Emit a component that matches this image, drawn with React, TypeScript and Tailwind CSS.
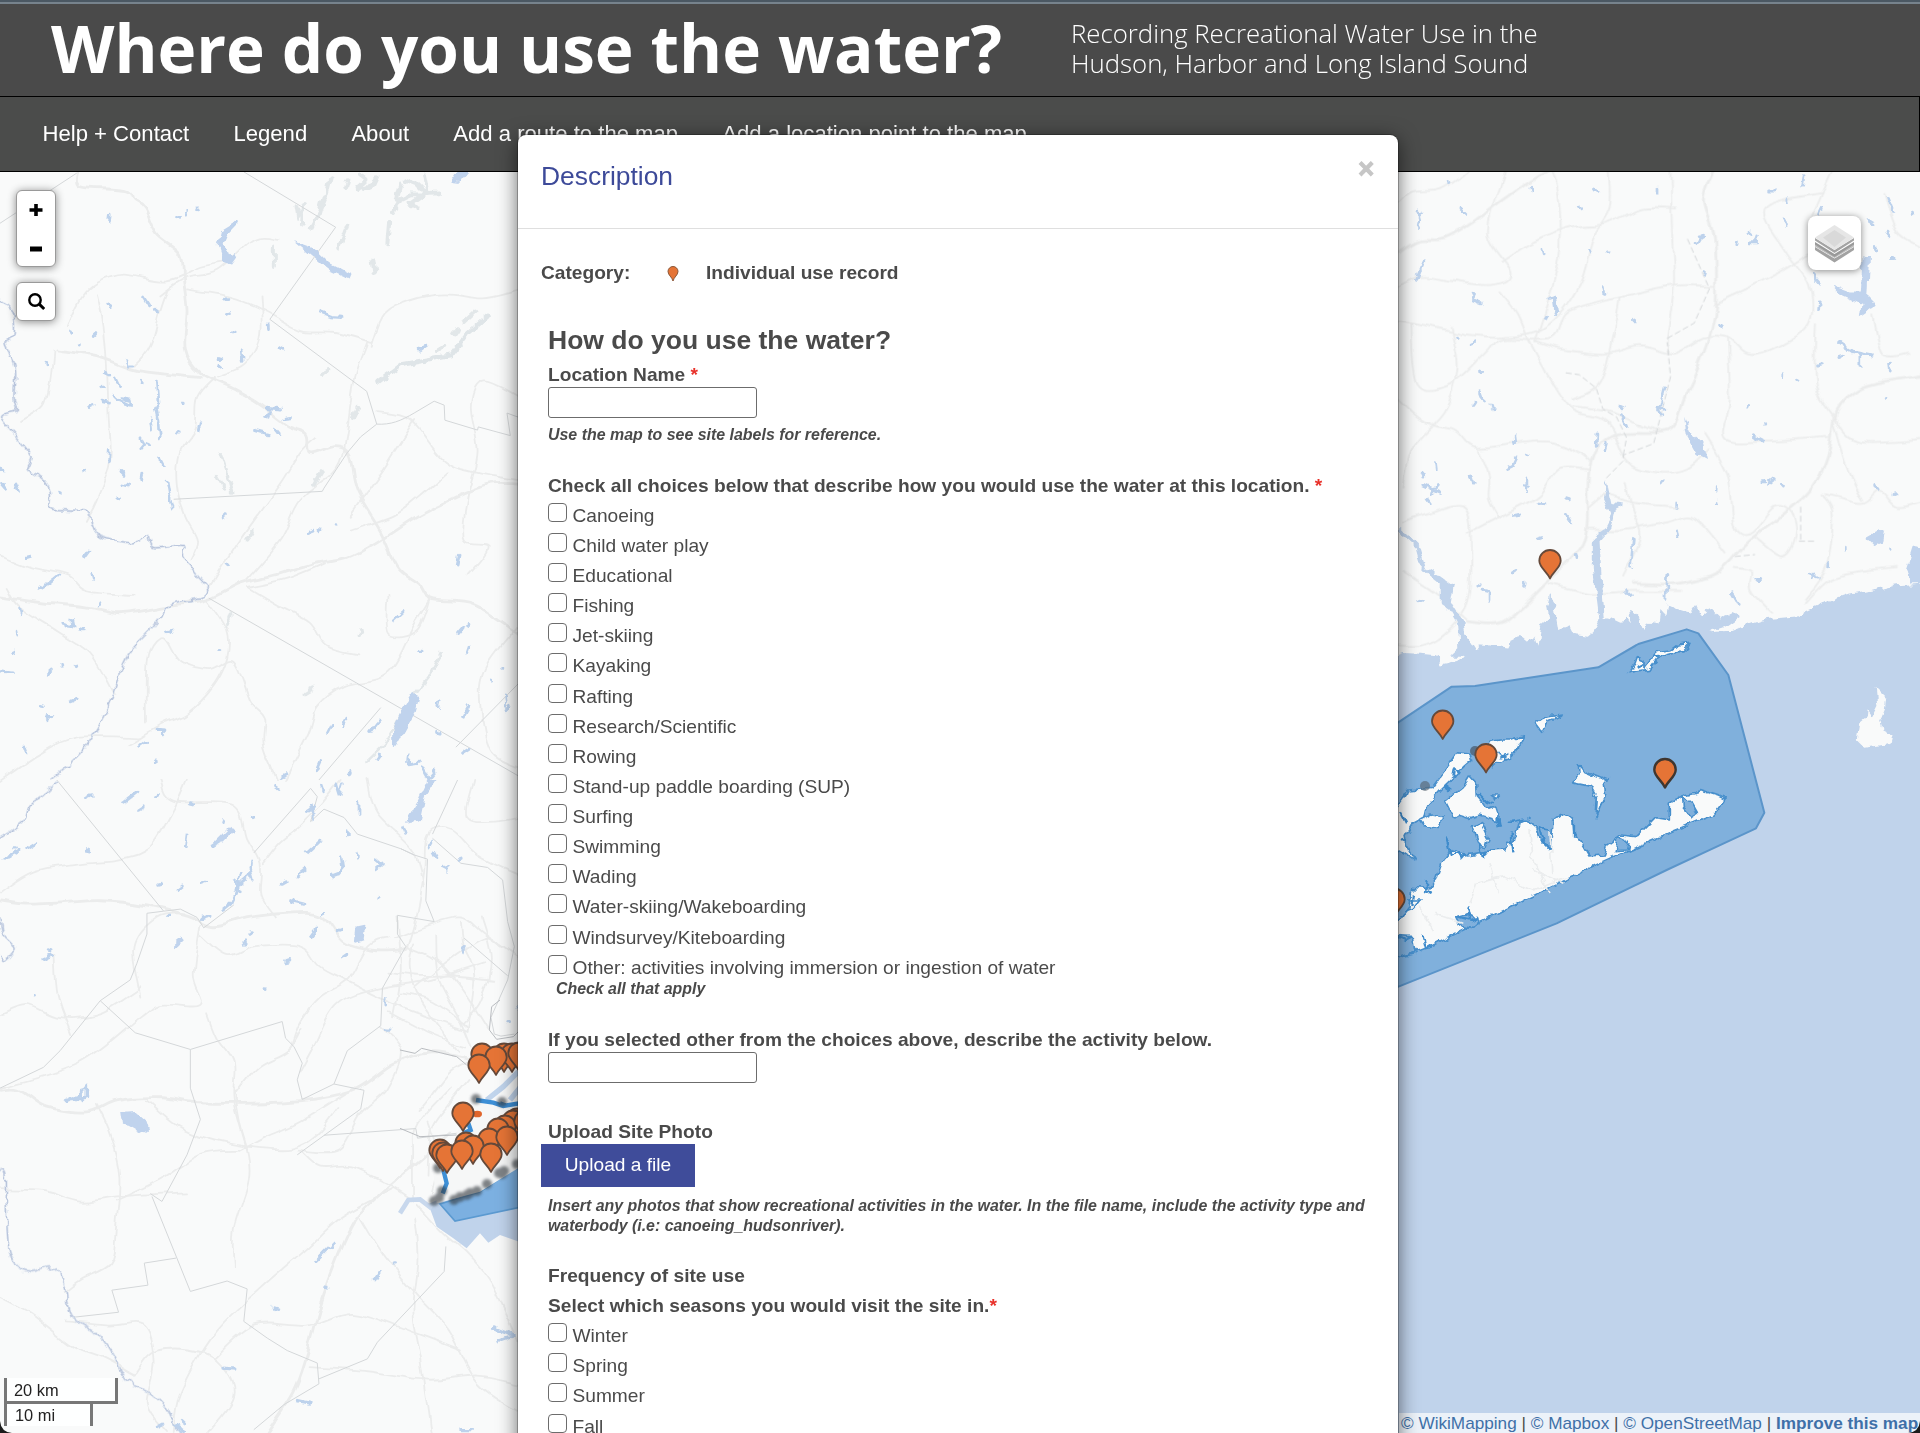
import React from "react";

type Pt = [number, number];

// Turns "x,y x,y ..." into a smooth path through every point.
function smooth(points: string): string {
  const p: Pt[] = points
    .trim()
    .split(/\s+/)
    .map((s) => s.split(",").map(Number) as Pt);
  let d = `M${p[0][0]} ${p[0][1]}`;
  for (let i = 0; i < p.length - 1; i++) {
    const a = p[Math.max(0, i - 1)];
    const b = p[i];
    const c = p[i + 1];
    const e = p[Math.min(p.length - 1, i + 2)];
    d += `C${b[0] + (c[0] - a[0]) / 6} ${b[1] + (c[1] - a[1]) / 6} ${c[0] - (e[0] - b[0]) / 6} ${c[1] - (e[1] - b[1]) / 6} ${c[0]} ${c[1]}`;
  }
  return d;
}

const NW = "translate(0 160) scale(0.33398 0.39541)";
const SW = "translate(0 780) scale(0.33398 0.41646)";
const NE = "translate(1390 170) scale(0.33801 0.38265)";
const LI = "translate(1390 540) scale(0.33333)";
const NY = "translate(400 1000) scale(0.33333)";

const nwRoads = [
  "235,30 245,65 375,75 400,100 430,120 470,190 540,240 550,310 560,380 555,480 600,540 700,580 780,620 860,670 920,690 930,740 1000,725 1045,745 1070,840 1140,940 1190,1030 1250,1070 1290,1110 1420,1125 1557,1200",
  "0,1105 130,1120 260,1130 360,1145 480,1130 620,1110 720,1070 820,1050 940,1020 1040,1005 1140,960 1250,900 1370,850 1470,820 1557,820",
  "170,480 300,500 400,530 480,540 600,550",
  "200,420 240,350 290,310 370,290 500,305 600,270 700,255",
  "290,340 310,420 320,520 325,640 330,760 290,860 260,910",
  "560,330 700,350 800,385 900,430 1000,435 1110,460",
  "400,520 450,470 480,380 500,330",
  "20,1080 60,1130 170,1190 270,1250 340,1350",
  "640,550 590,600 580,680 535,740 530,830 555,900 590,960 570,1010",
  "970,1020 850,1060 740,1080",
  "620,1110 680,1190 680,1260 640,1330 560,1400 480,1430 380,1480",
  "440,1420 440,1300 450,1240 490,1210 540,1270 630,1290 700,1270 750,1370 790,1410 790,1480 830,1568",
  "740,1080 840,1130 930,1170 980,1230 1070,1250",
  "1050,900 1100,840 1150,780 1240,660",
  "1050,940 1180,900 1260,850 1340,790",
  "1100,460 1060,560 1040,680 1010,780 900,860 840,960 740,1060",
  "1557,600 1450,560 1410,620 1430,740 1400,850 1390,960 1460,980 1400,1050",
  "1110,470 1150,390 1230,355 1330,340 1450,350 1557,330",
  "1130,640 1230,660 1330,760 1420,790 1557,810",
  "1557,1170 1450,1290 1440,1400 1470,1500 1557,1540",
  "1290,1110 1240,1180 1160,1300 1030,1330 950,1380 920,1450 850,1568",
  "160,480 150,560 130,620 60,660",
  "0,1000 90,1030 200,1050 260,1090 400,1100",
  "480,340 550,300 650,280 760,200 840,200",
  "780,340 780,450 730,520 650,550",
  "950,700 900,740 840,820 720,960 630,1080",
  "1160,1100 1165,1200 1250,1190 1290,1110",
  "0,1568 120,1500 230,1460 420,1460",
];
const swRoads = [
  "0,290 80,298 180,295 300,290 440,302 560,325 640,350 740,330 860,320 960,325 1030,390 1130,410 1220,405",
  "0,745 60,745 140,785 260,797 350,770 480,763 600,775 790,775 950,765 1070,740 1180,680 1290,655 1400,670",
  "800,1568 880,1470 920,1380 960,1260 1010,1150 1070,1050 1160,980 1250,920 1350,850",
  "0,270 100,220 240,200 360,190 450,160 520,70 560,0",
  "480,0 520,50 700,60 740,140 780,200 780,280 820,330",
  "700,740 720,830 740,890 745,960 700,1080 700,1170",
  "620,560 650,620 700,680 700,770 740,890",
  "440,770 530,830 620,860 740,880 870,885 950,850 1010,790",
  "290,780 330,850 360,950 350,1080 330,1160 240,1200 190,1230",
  "350,1010 480,960 600,900 720,890",
  "0,980 130,985 240,1010 350,1000 560,990",
  "520,1568 540,1470 640,1330 780,1220 910,1130 1020,1050 1180,980",
  "600,370 680,420 760,400 900,400 960,450 1030,480 1130,520 1250,560 1400,600",
  "790,200 840,150 900,110 960,60 1020,0",
  "1220,405 1250,320 1270,220 1280,130 1350,120 1430,180 1557,230",
  "1140,590 1200,650 1160,740 1080,800 1010,890 890,890",
  "870,640 900,580 960,520 1040,480 1100,400 1160,380",
  "700,760 770,690 860,650 900,600",
  "1240,1050 1250,1150 1235,1280 1260,1400 1290,1568",
  "1250,1020 1330,1090 1400,1140 1470,1210 1557,1360",
  "1080,1050 1150,1140 1250,1240 1340,1320 1430,1450 1557,1520",
  "900,890 960,930 1050,930 1160,970 1240,1010",
  "930,1410 1100,1420 1280,1440 1430,1430 1557,1450",
  "640,1390 760,1310 920,1310 1060,1280 1250,1330 1380,1370",
  "200,1300 330,1310 430,1310 460,1400 440,1500 500,1568",
  "400,1430 470,1370 620,1380 700,1470 620,1568",
  "0,1240 90,1280 220,1360 310,1390 400,1430",
  "720,890 790,860 900,820 1060,740",
  "1100,0 1130,80 1240,170 1270,260",
  "1420,0 1400,90 1480,100 1557,90",
  "600,350 580,470 600,540 480,540 420,570 240,680 0,740",
  "420,520 400,400 470,330 550,320",
  "0,560 80,540 180,570 300,560 420,500",
  "160,420 170,520 210,610",
  "900,700 940,640 1010,540 1140,500 1290,480 1450,440",
  "1180,380 1280,350 1380,330 1450,370 1557,430",
  "1220,400 1300,430 1380,500 1460,600",
  "1160,460 1250,470 1360,470 1480,480",
  "1200,510 1300,530 1400,590",
  "1240,390 1230,450 1260,530 1370,650",
  "1300,370 1310,470 1380,580 1410,640",
  "1380,340 1390,400 1420,470 1400,600",
  "1440,330 1470,430 1440,530 1390,580",
  "1500,400 1450,380 1350,430 1240,500",
  "1170,560 1290,610 1390,640",
  "1190,330 1200,460 1180,570",
  "1250,800 1290,760 1350,700 1420,670",
  "1240,1010 1240,900 1250,830 1350,740",
  "1280,950 1290,840 1340,780 1400,720",
  "1290,990 1310,900 1280,820",
];
const neRoads = [
  "0,230 80,185 160,180 240,140 330,80 420,25 470,0",
  "960,0 930,80 960,180 965,340 950,420 910,520 870,600 840,670 790,685 650,695 590,780 585,940 545,1010 460,1080 380,1150 320,1185 230,1180",
  "1568,535 1470,550 1390,570 1320,630 1300,730 1250,830 1150,910 1060,970 970,1050 850,1080 720,1080",
  "0,580 100,660 190,680 250,725 370,715 470,710 560,740 590,760",
  "260,730 290,800 290,860 320,910",
  "470,1080 590,1105 720,1100 860,1100",
  "0,320 90,280 180,290 300,300 360,270 290,160 340,0",
  "0,390 130,410 230,430 330,435 460,410 560,300 600,180 650,100 650,0",
  "60,400 80,560 180,560 280,480 330,440 480,440 530,370 680,330 830,300 960,300",
  "330,320 380,380 420,460 530,620 640,660 700,760 790,790 880,780 940,730",
  "430,450 520,470 640,480 740,460 840,480 930,440 1000,440 1060,480 1150,460 1240,400 1240,300 1170,210 1110,100 1280,60",
  "830,0 835,180 840,300 820,440 820,480",
  "960,350 1060,310 1170,260 1240,220",
  "1310,0 1280,60 1250,120",
  "480,0 500,80 500,230 430,450",
  "1260,400 1260,560 1310,640 1380,710 1568,705",
  "1000,440 1005,600 990,700 1100,710 1300,700",
  "230,1180 140,1110 40,1050",
  "0,1238 90,1240 160,1210 230,1130 240,1000 220,880 100,900 40,920",
  "590,780 500,780 440,850 340,900 230,950",
  "590,940 700,940 820,920 900,910 990,1000",
  "930,690 1000,800 1020,930 1070,950 1140,880 1190,900 1200,960 1160,1010 1080,960",
  "1020,1040 1070,1050 1070,1100 1130,1160",
  "1280,850 1310,900 1290,1040 1230,1120",
  "1290,850 1400,870 1450,840 1500,880 1568,870",
  "1400,860 1350,770 1310,650",
  "1230,1130 1300,1070 1400,1050 1500,1040",
  "700,820 720,900 740,960 690,1060",
  "590,880 640,850 720,870 850,880",
  "540,620 640,630 700,650 790,680",
  "180,410 200,520 160,630 70,720 40,830",
  "1568,200 1500,160 1460,60",
  "1430,380 1460,480 1530,480",
  "0,110 60,60 150,50 230,0",
  "680,330 660,430 620,560 540,600",
  "850,100 740,100 640,140 540,150 420,190 330,240",
];

const boundaries = {
  nw: "M730 30L1005 170L808 403L1098 585L1128 668C1170 670 1200 660 1240 640L1300 610L1330 620L1332 658L1430 683L1432 675L1528 697L1518 640L1557 652M1128 668L1080 700L1040 740L970 830L965 838L520 858M625 1108L1557 1560M0 160L230 33M955 1568L1140 1385M1365 1485L1557 1320",
  sw: "M170 0L490 315M570 647L845 580L855 620L880 640L905 680L890 720L905 767L1000 730L1090 745L1080 790L890 900M300 530L405 607L570 647L570 740L600 815L560 900L485 1012L450 993M455 1000L570 1228L680 1203L740 1222M220 1290L355 1278L335 1225L443 1213L432 1160L527 1148M970 853L1245 837L1250 860L1400 845M955 1438L1100 1390L1130 1350L1330 1180L1335 1120M490 315L540 310L590 330L610 355L700 300M440 370L440 320L490 315M440 370L410 440L390 480L300 530L180 650L130 690L0 740M740 1222L730 1300L800 1340L860 1370L950 1400L955 1450L850 1500L760 1560M760 175L930 20L950 40L930 100L970 70L1030 90L1070 130L1200 165L1240 180L1280 190L1275 290L1300 340L1190 325L1190 370L1215 400L1145 500L1140 590L1040 650L1000 730M1295 130L1370 0M1295 140L1380 200L1460 210L1505 240L1520 340L1540 400L1520 480L1470 570L1480 610L1500 615L1540 610M1200 165L1240 180M1390 380L1520 470",
};

// Short strokes read as the small lakes scattered over the land.
const lakes = {
  nw: "M327 140l-2 15M528 143l10 2M558 128l1 6M590 124l4 4M705 160l-25 22l-18 35l10 25l15 18M660 210l8 30M700 240l-20 12M430 347l18 24M462 378l8 6M325 367l6 3M675 350l4 3M678 388l12 -4M693 434l6 2M722 480l3 26M835 472l12 6M800 420l1 6M658 522l6 4M650 500l8 2M208 432l4 6M282 443l8 -6M232 468l6 -1M140 512l0 8M380 508l6 18l12 0M315 540l14 6M345 552l10 18M305 570l8 6M422 560l4 4M340 598l18 14l36 8l0 -12l-30 -4M270 624l12 -5M305 608l20 4M468 560l5 50l-8 20l8 30l4 40l-6 8M450 655l4 30M600 660l-6 22M540 618l6 0M525 690l6 0M425 708l8 12l-12 12M440 715l8 2M330 735l-2 30M800 628l40 4M792 648l18 -10M765 684l35 8M825 680l14 14M850 656l20 -2M500 810l10 50l5 20M475 750l14 22M250 788l6 -3M362 785l12 10M368 820l14 4M425 795l-4 16M350 855l8 4M175 840l6 2M0 782l15 4M5 820l12 12M48 820l8 18M115 1085l30 -15l28 -20M275 1048l4 12M250 1005l16 -18M80 1005l12 -3M293 1125l6 -8M62 1135l4 12M185 1170l15 4M215 1165l4 16M200 1178l25 2M240 1186l8 2M48 1192l2 12M35 1248l8 -3M0 1292l40 3M140 1300l20 -15M188 1276l0 4M228 1278l2 2M210 1370l18 -6M120 1380l10 2M140 1405l16 0l-15 10M500 1195l18 -6M655 1238l4 0M665 905l10 -5M680 1022l4 2M920 943l18 -6M955 935l6 -4M1000 920l6 1M960 386l30 10l34 2M1375 1000l-6 24M1178 1165l26 -20M1370 1200l20 -20M1400 1175l4 2M1405 1230l-8 20M1252 1240l12 0M1315 1368l-4 14M1385 1410l20 -30M1505 1285l4 0M1475 1310l0 12M1510 1350l4 30M1515 1390l10 -8M980 1450l12 -20M1028 1430l10 -18M1110 1445l24 -28M945 1545l14 -28M470 1440l30 2l-14 12M415 1482l22 -14M465 1520l0 6M75 1485l6 14M1125 1520l12 -14M1225 1505l-2 22l30 -4M1262 1535l20 30l20 -20M1310 1450l8 4M1385 1500l22 -12M845 1560l14 -5M1040 1555l12 -3M1255 480l20 -12",
  sw: "M255 42l15 -6M370 55l40 -25M415 72l20 -10M465 38l10 -3M40 163l10 0M15 190l45 -20M80 165l25 -12M255 168l14 2M635 158l30 -15l30 -25M665 98l4 4M570 55l10 2M825 18l8 4M755 90l8 -2M555 160l5 -30M475 250l8 -2M530 265l16 -10M605 250l14 -4M750 200l-4 30l-30 20l-25 45l-30 20M700 240l20 30M720 225l-15 45M605 330l24 -6M745 210l10 30M930 60l6 35M920 75l20 -10M1075 52l0 30M965 15l4 10M1005 10l10 26M1025 10l-10 25M920 175l38 -28M890 230l24 -15M845 250l12 -5M1025 185l4 25l-15 15M995 230l20 -6M1070 180l0 8M1125 190l20 14M1130 210l14 -8M1128 285l4 -2M1040 120l0 16M965 325l10 -6M870 290l15 4l22 4M930 375l18 -20M1013 362l10 -3M735 395l-2 -6M745 368l5 -3M1028 425l14 -8M1205 115l6 15M1285 165l10 -14M1300 175l8 12M1325 210l14 6M1375 190l6 -2M1385 415l4 -12M855 436l10 -2M150 410l-6 -2M125 430l30 -10M100 518l4 0M790 499l10 1M500 325l8 0M195 770l40 -12l25 -25l0 30M205 765l50 0M240 745l8 30M975 1218l4 2M1120 1200l16 -20M1180 1157l8 0M945 1155l55 -45M1480 1315l60 20l-50 15M670 1410l40 2M890 1490l36 6M1155 530l0 12M1150 598l18 0M470 1555l18 -8M525 1550l25 12M545 1538l8 6M1385 1560l30 0M1550 540l5 10M1520 580l12 0M820 1268l12 3",
  ne: "M175 25l2 10M85 110l6 20l-5 18M80 105l8 15l8 -8M210 103l14 10M605 50l8 8M417 48l2 6M793 45l0 18M560 97l4 4M100 240l-22 45M90 265l-8 20M240 325l8 14l22 8M452 205l4 14M590 210l2 4M640 212l8 0M630 305l6 20M470 335l20 -5l5 35l-10 10M485 335l6 40M460 390l4 -10M720 392l2 2M200 440l2 2M240 455l16 -6M268 520l0 10M265 580l8 18l10 8M298 618l10 6M245 615l6 -8M372 710l-2 -12M400 745l10 4M375 750l-12 22l-18 8M135 765l2 14M240 800l6 18M405 805l0 30M395 825l18 4M100 825l50 20M110 860l10 12M120 845l20 -20M95 790l5 10M438 870l18 2M520 857l8 2M525 905l10 14M365 905l20 -3M435 965l14 -4M548 1005l2 10M365 1050l10 -6M260 1085l10 -4M275 1098l18 4l0 22M400 1080l-2 10M85 1128l14 -4M905 190l10 -15M920 175l8 -4M930 270l-2 6M1028 185l-2 10M1065 160l4 6M1068 190l14 0M1090 170l-12 16M1120 55l20 0M1168 75l2 8M1225 15l-4 25M1165 130l8 20M1268 115l8 -15M1475 75l16 36M1540 108l2 8M1410 130l22 12M1435 200l8 6M1470 160l6 14M1480 234l14 0M1250 275l20 20M1270 345l-2 22M975 405l6 4M1330 450l40 24l60 10M1390 480l0 30M1328 490l10 -3M1265 512l14 -3M1478 505l2 20M1165 535l0 10M1203 547l4 2M1468 596l2 -4M1062 622l2 -4M1105 664l4 0M1075 695l32 14M800 820l8 -10M965 830l0 6M968 866l0 4M848 870l0 14M848 940l4 20M1100 812l12 0M1120 820l14 -10M1160 824l4 4M1440 825l4 4M1488 848l6 -2M1350 985l0 8M1475 992l2 4M1240 1058l24 8M1250 1070l8 -14M1085 1070l12 0M1295 1030l0 12M810 570l-14 50l14 5M790 620l14 20M615 690l-2 30M640 715l-4 14M680 620l10 4M685 640l15 30M720 965l-8 70M822 1060l-6 60M700 1100l14 12M1010 1105l20 30",
};

const ridges =
  "M990 45l-12 40l-22 45l-28 45M970 90l-20 60M885 120l5 25M910 115l-6 45M1040 50l-6 18M1075 38l22 14l-26 20M1130 40l-12 22l-30 10M1180 130l20 -30l30 -12l40 0M1200 60l-12 40M1215 50l30 10l30 25l40 -2M1270 40l10 40l-50 30M1165 160l-5 50M1040 165l-24 55M900 140l-6 -14M1115 250l6 35M1220 110l30 10M1390 410l36 -28M820 220l0 50M1310 480l20 -10M1360 440l10 -12M965 540l18 -8M760 940l-22 24M940 820l20 -30M690 1150l-10 25M1080 1190l-6 10M915 1350l20 -10M1060 650l10 -20";

const rivers = [
  [NW, "0,355 35,380 42,440 15,465 45,520 45,600 50,635 5,650 50,700 95,750 85,780 125,805 150,840 152,880 200,885 265,890 275,920 300,952 400,968 440,950 460,980 548,975 550,1000 590,1050 622,1085 600,1110 515,1125 460,1180 385,1250 345,1330 310,1410 240,1500 150,1568"],
  [SW, "0,940 18,950 20,1060 35,1150 90,1180 150,1170 190,1200 215,1285 300,1335 340,1380 380,1440 480,1490 530,1560"],
  [SW, "0,330 10,370 42,400 20,430 0,425"],
  [SW, "175,0 140,30 90,60 70,100 0,140"],
];

const coast =
  "M-12 1280L40 1262L90 1264L135 1268L150 1292L215 1280L218 1272L178 1272L205 1250L202 1190L175 1150L150 1135L150 1085L110 1055L90 1035L75 985L30 950V935L55 955L85 980L105 1040L145 1060L185 1085L190 1080L180 1130L205 1165L218 1185L225 1215L255 1258L270 1240L350 1248L365 1222L385 1218L405 1232L430 1220L440 1243L447 1190L468 1175L462 1140L470 1110L485 1130L490 1160L498 1200L530 1190L545 1215L585 1220L605 1205L620 1180L600 1040L600 960L640 935L655 910L630 860L640 808L655 870L690 875L668 885L655 935L620 970L625 1050L635 1170L655 1175L680 1185L700 1165L715 1185L710 1150L735 1170L750 1205L765 1180L795 1185L800 1150L815 1165L820 1130L850 1150L885 1160L905 1135L920 1165L945 1145L980 1175L1020 1150L1040 1165L1000 1190L950 1205L1010 1205L1110 1170L1200 1165L1240 1150L1340 1110L1420 1100L1500 1085L1600 1080V1900H-12Z";

const pinsRight: Pt[] = [[1550, 578.5], [1442.7, 739], [1486, 772.5], [1394, 917]];
const pinsLeft: Pt[] = [
  [482, 1072], [504, 1072], [512, 1072], [519, 1071], [496, 1075], [479, 1083],
  [517, 1137], [513, 1139], [505, 1144], [498, 1147], [466, 1161], [525, 1139], [489, 1157], [507, 1155],
  [440, 1168], [443, 1171], [447, 1173], [473, 1164], [462, 1169], [491, 1172], [463, 1131],
];
const smudges: Pt[] = [
  [476, 1099], [502, 1102], [438, 1168], [442, 1191], [434, 1201], [439, 1198], [454, 1200], [460, 1197],
  [467, 1195], [470, 1193], [477, 1191], [487, 1184], [499, 1173], [504, 1171], [502, 1174], [517, 1164],
];

function Pin({ x, y, dark = false }: { x: number; y: number; dark?: boolean }) {
  return (
    <path
      transform={`translate(${x} ${y})`}
      d="M0 0C-3 -7 -10.7 -11 -10.7 -17.8A10.7 10.7 0 0 1 10.7 -17.8C10.7 -11 3 -7 0 0Z"
      fill="#e57436"
      stroke={dark ? "#3f3630" : "#65493a"}
      strokeWidth={dark ? 2.4 : 1.8}
      strokeLinejoin="round"
    />
  );
}

function Lines({ t, list }: { t: string; list: string[] }) {
  return (
    <g transform={t}>
      {list.map((r, i) => (
        <path key={i} d={smooth(r)} vectorEffect="non-scaling-stroke" strokeWidth={i < 3 ? 2.8 : 1.8} />
      ))}
    </g>
  );
}

function MapCanvas() {
  return (
    <svg className="absolute inset-0 h-full w-full" viewBox="0 0 1920 1433">
      <defs>
        <filter id="soft">
          <feGaussianBlur stdDeviation="1.5" />
        </filter>
        <filter id="ragged" filterUnits="userSpaceOnUse" x="0" y="0" width="1920" height="1433">
          <feTurbulence type="fractalNoise" baseFrequency="0.11" numOctaves="2" seed="4" />
          <feDisplacementMap in="SourceGraphic" scale="8" xChannelSelector="R" yChannelSelector="G" />
        </filter>
        <filter id="wavy" filterUnits="userSpaceOnUse" x="0" y="0" width="1920" height="1433">
          <feTurbulence type="fractalNoise" baseFrequency="0.04" numOctaves="2" seed="9" />
          <feDisplacementMap in="SourceGraphic" scale="9" xChannelSelector="R" yChannelSelector="G" />
        </filter>
      </defs>
      <rect width="1920" height="1433" fill="#f9fafa" />
      <g fill="none" stroke="#ebecec" strokeLinecap="round" strokeLinejoin="round" filter="url(#wavy)">
        <Lines t={NW} list={nwRoads} />
        <Lines t={SW} list={swRoads} />
        <Lines t={NE} list={neRoads} />
      </g>
      <g filter="url(#ragged)">
        <g transform={NW} fill="none" stroke="#e2e7e9" strokeWidth="12" strokeLinejoin="round" strokeLinecap="round">
          <path d={ridges} />
          <path d="M1130 562L1200 518L1350 495L1400 440L1460 395" strokeWidth="13" stroke="#dfe5e8" />
          <path d="M660 740l20 50l15 50M650 800l20 30" strokeWidth="8" />
          <path d="M1320 1245L1290 1300L1210 1390L1150 1480L1100 1520" strokeWidth="7" />
        </g>
      </g>
      <g fill="none" stroke="#d4d7d9" strokeWidth="1">
        <path transform={NW} d={boundaries.nw} vectorEffect="non-scaling-stroke" />
        <path transform={SW} d={boundaries.sw} vectorEffect="non-scaling-stroke" />
        <path
          transform={NE}
          d="M640 805L690 760L690 745L780 715L790 680L830 540L820 450M820 440L900 400L945 310L880 180M1210 970L1260 970M1215 880L1215 970M1020 1010L1080 1005M520 530L560 535L610 570L630 625L670 645L700 700L690 745"
          vectorEffect="non-scaling-stroke"
          strokeDasharray="6 3"
        />
      </g>
      <g fill="none" filter="url(#ragged)">
        {rivers.map(([t, d], i) => (
          <g key={i} transform={t}>
            <path d={smooth(d)} stroke="#dbe3ef" strokeWidth="2.4" vectorEffect="non-scaling-stroke" />
            <path d={smooth(d)} stroke="#b3c0d8" strokeWidth="0.9" vectorEffect="non-scaling-stroke" />
          </g>
        ))}
      </g>
      <g filter="url(#ragged)">
        <g fill="none" stroke="#bdd2ec" strokeLinejoin="round" strokeLinecap="round" strokeWidth="8">
          <path transform={NW} d={lakes.nw} />
          <path transform={SW} d={lakes.sw} />
          <path transform={NE} d={lakes.ne} />
        </g>
        <g fill="#c0d3ed">
          <g transform={NW}>
            <path d="M880 205L945 225L985 258L1052 288L1045 302L980 276L936 244Z" />
            <path d="M705 158L685 180L668 205L672 225L690 235L708 245L692 264L668 258L652 215L662 180Z" />
            <path d="M1345 55L1370 25H1410L1375 58Z" />
            <path d="M1240 1345L1256 1360L1242 1402L1196 1470L1180 1490L1176 1440L1200 1396Z" />
          </g>
          <g transform={SW}>
            <path d="M360 797L400 795L435 820L443 840L425 848L385 830L365 828Z" />
            <path d="M1068 350L1095 345L1088 385L1062 392Z" />
            <path d="M1280 0H1304L1272 40L1258 95L1215 100L1245 60Z" />
            <path d="M525 385L540 375L547 388L524 404Z" />
            <path d="M640 150L690 110L700 125L670 150Z" />
          </g>
          <g transform={NE}>
            <path d="M1395 230H1420L1415 330L1440 352L1390 382L1395 350L1330 325L1305 302L1360 320L1390 320Z" />
            <path d="M1410 960L1440 945L1465 942L1458 975L1435 982Z" />
            <path d="M870 645L890 690L925 715L938 758L910 745L878 695Z" />
            <path d="M1540 1080L1530 1040L1550 985L1580 990V1080Z" />
          </g>
        </g>
        <path transform={NE} d={coast} fill="#c0d3eb" />
        <g transform={NE} fill="#f9fafa">
          <path d="M1437 1353L1468 1380L1464 1410L1450 1440L1457 1462L1487 1475L1480 1500L1400 1510L1378 1490L1386 1445L1408 1430L1410 1412L1425 1430L1442 1400Z" />
          <path d="M945 1208L1110 1160L1200 1158L1250 1140L1340 1105L1420 1093L1490 1082L1490 1088L1350 1112L1240 1146L1210 1166L1110 1174L1000 1205Z" />
        </g>
      </g>
      <path d="M1386 800H1920V1433H1386ZM1900 600H1920V820H1900ZM1386 660H1400V820H1386Z" fill="#c0d3eb" />

      <g transform={LI} strokeLinejoin="round">
        <path
          d="M-12 572L185 440L255 438L625 382L745 312L890 268L925 280L1015 405L1123 818L1098 865L830 990L500 1150L-12 1355Z"
          fill="#80b0dc"
          stroke="#5b95ca"
          strokeWidth="6"
        />
      </g>
      <g filter="url(#ragged)">
        <g transform={LI} strokeLinejoin="round">
          <g fill="#f9fafa" stroke="#478fcc" strokeWidth="5">
            <path d="M-12 820L0 830L55 750L125 745L165 690L205 635L240 640L245 660L210 690L190 712L150 750L110 795L100 840L62 860L45 890L50 920L78 962L30 930L-12 940Z" />
            <path d="M300 605L330 600L365 600L400 590L380 630L350 660L330 640L345 650L310 680L270 640Z" />
            <path d="M435 550L455 535L478 530L520 525L475 545L458 580Z" />
            <path d="M715 398L735 370L742 350L762 360L762 385L800 335L845 330L865 315L900 310L880 332L830 345L800 360L780 388L745 392Z" />
            <path d="M568 672L585 695L652 722L640 735L645 770L632 795L618 830L622 770L605 740L548 728L570 705Z" />
            <path d="M165 785L220 740L240 708L260 730L262 770L275 785L328 820L325 842L270 825L235 835L205 825L190 835Z" />
            <path d="M300 765L328 765L320 780Z" />
            <path d="M245 855L275 848L295 890L285 920L262 912Z" />
            <path d="M90 840L125 822L160 828L145 865L105 860Z" />
            <path d="M-12 1268L25 1252L60 1245L78 1240L70 1190L0 1185L-12 1170L30 1140L60 1100L65 1045L110 1048L140 1015L155 970L185 930L230 945L285 935L345 930L350 910L372 910L388 845L415 838L440 858L450 900L480 930L490 840L515 820L548 835L552 880L575 905L600 948L640 945L650 915L690 885L740 890L795 833L838 840L838 790L885 765L935 752L985 768L1005 778L970 825L850 872L600 985L300 1130L130 1215Z" />
          </g>
          <path d="M200 1130L235 1120L270 1140L245 1165L215 1160ZM685 890L715 905L710 930L675 932ZM878 768L905 790L922 820L905 830L880 800Z" fill="#80b0dc" stroke="#478fcc" strokeWidth="5" />
          <g fill="none" stroke="#3f8ccc" strokeWidth="7">
            <path d="M170 890l15 55l20 -8l10 15l12 -15M265 910l10 40l15 -20M365 880l5 60M450 860l10 40l20 30M552 840l0 50M190 710l5 -25l20 10M160 740l20 15M45 850l-15 -30M30 900l20 10M110 1020l-5 40l20 -10M75 1060l-5 35M95 1185l10 40l20 -5M25 1190l20 10l20 -10M265 760l20 20l30 10M325 650l30 -10M740 380l20 -10M795 345l10 10M325 835l5 25M205 1130l40 10l20 -10M235 1105l5 30" />
            <path d="M50 1080l40 0l-20 25l-30 10M30 1130l15 -10M355 845l55 -8M450 865l30 5" strokeWidth="5" />
          </g>
          <path d="M420 870L425 950L480 1060M300 970L325 1060M130 1120L220 1150M240 1090L260 1030L340 1010L430 1050L530 1010M480 870L485 1000M430 990L520 1030M90 1100L130 1170" fill="none" stroke="#ebedee" strokeWidth="5" />
        </g>
      </g>
      <circle cx="1475" cy="751" r="5" fill="#333c47" opacity=".55" />
      <circle cx="1425" cy="786" r="5" fill="#55606b" opacity=".6" />

      <g transform={NY}>
        <path d="M85 612L110 680L160 715L200 745L240 700L265 728L300 705L370 730V500L200 560Z" fill="#c0d3eb" />
        <path d="M0 640L25 600L60 598L95 625" fill="none" stroke="#c8d8ed" strokeWidth="14" />
        <path d="M120 612L240 575L370 490V620L165 663Z" fill="#7cb0e1" stroke="#5b9ad1" strokeWidth="5" />
        <path d="M100 520L110 610L240 575L370 495V320L220 300L170 400Z" fill="#f6f7f7" />
        <path d="M355 215L310 260L260 300M370 250L330 300" stroke="#c0d4ec" strokeWidth="16" fill="none" />
        <path d="M228 300L280 308L310 318L370 308M130 510L140 550L128 580M205 370L212 390L190 400M300 310L320 318" stroke="#3d8fd6" strokeWidth="13" fill="none" />
        <path d="M268 90L275 20L300 0M268 90L290 118L340 110L360 90M0 150L45 160L65 145L170 170L200 195M0 385L60 410L170 405" stroke="#b9bcc0" strokeWidth="3" fill="none" />
        <ellipse cx="232" cy="342" rx="14" ry="10" fill="#e0652b" />
      </g>
      <g fill="#343a40" opacity=".62" filter="url(#soft)">
        {smudges.map(([x, y], i) => (
          <circle key={i} cx={x} cy={y} r="5" />
        ))}
      </g>
      {pinsLeft.map(([x, y], i) => (
        <Pin key={i} x={x} y={y} />
      ))}
      {pinsRight.map(([x, y], i) => (
        <Pin key={i} x={x} y={y} />
      ))}
      <Pin x={1665} y={787.5} dark />
    </svg>
  );
}

function CheckRow({ label }: { label: string }) {
  return (
    <label className="flex h-[30.15px] items-start leading-[30.15px]">
      <span className="mt-[2px] mr-[5.5px] block h-[19px] w-[19px] shrink-0 rounded-[4px] border border-[#6c6c6c] bg-white" />
      {label}
    </label>
  );
}

const Star = () => <span className="text-[#e8322b]">*</span>;
const TextBox = () => <div className="h-[31px] w-[209px] rounded-[3px] border border-[#6c6c6c] bg-white" />;

const activities = [
  "Canoeing", "Child water play", "Educational", "Fishing", "Jet-skiing", "Kayaking", "Rafting",
  "Research/Scientific", "Rowing", "Stand-up paddle boarding (SUP)", "Surfing", "Swimming", "Wading",
  "Water-skiing/Wakeboarding", "Windsurvey/Kiteboarding",
  "Other: activities involving immersion or ingestion of water",
];

function DescriptionDialog() {
  return (
    <section className="absolute top-[135px] left-[518px] h-[1320px] w-[880px] rounded-t-[8px] bg-white text-[19.15px] text-[#4a4a4a] shadow-[0_4px_20px_rgba(0,0,0,0.6),0_0_0_1px_rgba(0,0,0,0.25)]">
      <header className="flex h-[94px] items-start justify-between border-b border-[#dfdfdf] pr-[24px] pl-[23px]">
        <h2 className="mt-[25px] text-[26.4px] leading-[32px] text-[#3d4a99]">Description</h2>
        <button className="mt-[18px] text-[27px] leading-[32px] font-bold text-[#c6c6c6] [-webkit-text-stroke:1.2px_#c6c6c6]">×</button>
      </header>
      <div className="px-[30px] pt-[28.5px]">
        <div className="-ml-[7px] flex h-[30px] items-center font-bold leading-[30px]">
          <span className="w-[126px]">Category:</span>
          <svg className="mt-[2px] mr-[27px] h-[16px] w-[12px]" viewBox="-6 -15 12 16">
            <path d="M0 0C-1 -4 -5 -6 -5 -9.5A5 5 0 0 1 5 -9.5C5 -6 1 -4 0 0Z" fill="#e57436" stroke="#8a5738" />
          </svg>
          Individual use record
        </div>
        <h3 className="mt-[34.5px] text-[26.5px] leading-[36px] font-bold">How do you use the water?</h3>
        <div className="mt-[4.5px] font-bold leading-[24px]">
          Location Name <Star />
        </div>
        <TextBox />
        <p className="mt-[7px] text-[15.95px] leading-[20px] font-bold italic">Use the map to see site labels for reference.</p>
        <div className="mt-[26px] font-bold leading-[30.15px]">
          Check all choices below that describe how you would use the water at this location. <Star />
        </div>
        {activities.map((a) => (
          <CheckRow key={a} label={a} />
        ))}
        <p className="pl-[8px] text-[15.9px] leading-[12px] font-bold italic">Check all that apply</p>
        <div className="mt-[33px] font-bold leading-[24px]">
          If you selected other from the choices above, describe the activity below.
        </div>
        <TextBox />
        <div className="mt-[37px] font-bold leading-[24px]">Upload Site Photo</div>
        <button className="-ml-[7px] block h-[43px] w-[154px] bg-[#3f4c9a] text-white">Upload a file</button>
        <p className="mt-[9px] w-[825px] text-[15.92px] leading-[19.7px] font-bold italic">
          Insert any photos that show recreational activities in the water. In the file name, include the activity type and
          <br />
          waterbody (i.e: canoeing_hudsonriver).
        </p>
        <div className="mt-[25.5px] font-bold leading-[30.15px]">Frequency of site use</div>
        <div className="font-bold leading-[30.15px]">
          Select which seasons you would visit the site in.
          <Star />
        </div>
        {["Winter", "Spring", "Summer", "Fall"].map((s) => (
          <CheckRow key={s} label={s} />
        ))}
      </div>
    </section>
  );
}

function MapControls() {
  return (
    <>
      <div className="absolute top-[190px] left-[16px] flex flex-col gap-[15px]">
        <div className="flex h-[77px] w-[40px] flex-col items-center rounded-[6px] border border-[#9a9a9a] bg-white shadow-[0_1px_8px_rgba(0,0,0,0.45)]">
          <div className="flex h-[38px] items-center">
            <svg width="14" height="14" viewBox="0 0 14 14"><path d="M7 1v12M0.5 7h13" stroke="#000" strokeWidth="3.6" /></svg>
          </div>
          <div className="flex h-[38px] items-center">
            <svg width="14" height="14" viewBox="0 0 14 14"><path d="M1 9h12" stroke="#000" strokeWidth="5" /></svg>
          </div>
        </div>
        <div className="flex h-[39px] w-[40px] items-center justify-center rounded-[6px] border border-[#9a9a9a] bg-white shadow-[0_1px_8px_rgba(0,0,0,0.45)]">
          <svg width="18" height="18" viewBox="0 0 18 18" fill="none" stroke="#000">
            <circle cx="8" cy="7" r="5.7" strokeWidth="2.4" />
            <path d="M12.2 11.2L17.2 16" strokeWidth="3" />
          </svg>
        </div>
      </div>
      <div className="absolute top-[216px] left-[1808px] h-[54px] w-[53px] rounded-[8px] bg-white shadow-[0_1px_7px_rgba(0,0,0,0.45)]">
        <svg width="53" height="54" viewBox="0 0 53 54">
          <path d="M7 31L26.5 42.5L46 31V34L26.5 46.5L7 34Z" fill="#a2a2a2" />
          <path d="M7 27L26.5 39L46 27V30.5L26.5 42L7 30.5Z" fill="#bdbdbd" />
          <path d="M7 26L26.5 38L46 26V28.5L26.5 41L7 28.5Z" fill="#999" />
          <path d="M7 22L26.5 34L46 22V24.5L26.5 37L7 24.5Z" fill="#a4a4a4" />
          <path d="M26.5 9L46 21.5L26.5 34L7 21.5Z" fill="#e6e6e6" />
          <path d="M26.5 14L38 21.5L26.5 31L15 21.5Z" fill="#d9d9d9" />
        </svg>
      </div>
      <div className="absolute top-[1378px] left-[4px] flex flex-col items-start text-[16.4px] text-[#222]">
        <div className="h-[26px] w-[114px] border-x-[3px] border-b-[3px] border-[#777] bg-white/85 pl-[7px] leading-[25px]">20 km</div>
        <div className="h-[22px] w-[89px] border-x-[3px] border-[#777] bg-white/85 pl-[8px] leading-[23px]">10 mi</div>
      </div>
      <div className="absolute top-[1413px] left-[1399px] h-[20px] w-[521px] bg-[#ecf2f9] pl-[2px] text-[17.18px] leading-[20px] whitespace-nowrap text-[#4a4a4a]">
        <span className="text-[#3f70a8]">© WikiMapping</span> | <span className="text-[#3f70a8]">© Mapbox</span> |{" "}
        <span className="text-[#3f70a8]">© OpenStreetMap</span> |{" "}
        <span className="font-bold text-[#3f70a8]">Improve this map</span>
      </div>
      <svg className="absolute bottom-0 left-0" width="12" height="12"><path d="M0 0Q1 11 12 12H0Z" fill="#1b1b1b" /></svg>
      <svg className="absolute right-0 bottom-0" width="12" height="12"><path d="M12 0Q11 11 0 12H12Z" fill="#1b1b1b" /></svg>
    </>
  );
}

export default function App() {
  return (
    <main className="relative h-[1433px] w-[1920px] overflow-hidden font-['Liberation_Sans',Arial,sans-serif]">
      <MapCanvas />
      <div className="relative h-[4px] border-t-2 border-[#4b5863] bg-[#77838d]" />
      <header className="relative flex h-[92px] items-start bg-[#4a4a4a] font-['Open_Sans',sans-serif] whitespace-nowrap text-white">
        <h1 className="mr-[59px] ml-[51px] w-[961px] pt-[2px] text-[65.6px] leading-[84px] font-bold">Where do you use the water?</h1>
        <p className="pt-[14px] text-[25.75px] leading-[30px] font-light">
          Recording Recreational Water Use in the
          <br />
          Hudson, Harbor and Long Island Sound
        </p>
      </header>
      <nav className="relative flex h-[76px] items-start gap-[44.2px] border-y border-r border-black bg-[#4b4c4b] pt-[24px] pl-[42.5px] text-[22.1px] leading-[26px] whitespace-nowrap text-white">
        <span>Help + Contact</span>
        <span>Legend</span>
        <span>About</span>
        <span>Add a route to the map</span>
        <span>Add a location point to the map</span>
      </nav>
      <MapControls />
      <DescriptionDialog />
    </main>
  );
}
